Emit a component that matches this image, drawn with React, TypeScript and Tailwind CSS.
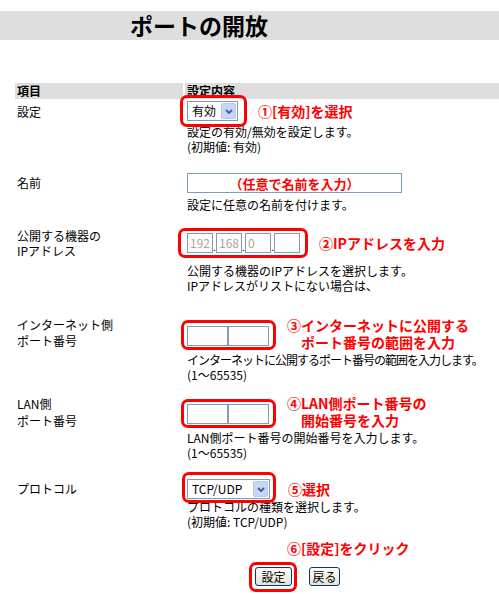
import type { ReactNode } from "react";

// red annotation frame drawn over a control
function Frame({ children, inset }: { children: ReactNode; inset: string }) {
  return (
    <div className="relative inline-flex">
      {children}
      <span
        className={`pointer-events-none absolute rounded-[7px] border-[3px] border-[#ff0000] ${inset}`}
      />
    </div>
  );
}

function Select({ value, width }: { value: string; width: string }) {
  return (
    <div
      className={`flex h-[20px] items-center justify-between border border-[#7f9db9] bg-white pl-[4px] pr-[1px] ${width}`}
    >
      <span className="text-[12px] leading-none">{value}</span>
      <span className="flex h-[16px] w-[15px] items-center justify-center rounded-[2px] border border-[#b4c8f6] bg-[#c6d6fb]">
        <svg width="8" height="5" viewBox="0 0 8 5">
          <path d="M1 1 L4 4 L7 1" fill="none" stroke="#4d6185" strokeWidth="2" />
        </svg>
      </span>
    </div>
  );
}

function XpButton({ label, width }: { label: string; width: string }) {
  return (
    <button
      className={`flex h-[19px] items-center justify-center rounded-[3px] border border-[#003c74] bg-gradient-to-b from-white to-[#e6e3d6] text-[12px] leading-none text-black ${width}`}
    >
      {label}
    </button>
  );
}

function PortPair() {
  return (
    <div className="flex">
      <div className="h-[20px] w-[41px] border border-[#7f9db9]" />
      <div className="h-[20px] w-[41px] border border-[#7f9db9]" />
    </div>
  );
}

const note = "font-bold text-[#ff0000] text-[14px] whitespace-nowrap";
const label = "ml-[15px] w-[170px] shrink-0 pl-[2px] whitespace-nowrap";

export default function App() {
  return (
    <div className="h-[594px] w-[499px] overflow-hidden bg-white font-['Noto_Sans_CJK_JP',sans-serif] text-[12px] leading-[15px] text-black">
      {/* Title band */}
      <div className="mt-[11px] flex h-[29px] items-center bg-[#dedede] pl-[130px] text-[23px] font-bold leading-none">
        ポートの開放
      </div>

      {/* Table header */}
      <div className="mt-[43px] flex h-[16px] font-bold leading-[16px]">
        <div className="ml-[15px] w-[168px] shrink-0 bg-[#dedede] pl-[2px]">項目</div>
        <div className="ml-[2px] flex-1 bg-[#dedede] pl-[2px]">設定内容</div>
      </div>

      {/* 設定 */}
      <div className="flex">
        <div className={`${label} pt-[5px]`}>設定</div>
        <div className="pl-[2px] pt-[2px]">
          <div className="flex items-center">
            <Frame inset="-left-[7px] -right-[9px] -top-[6px] -bottom-[6px]">
              <Select value="有効" width="w-[51px]" />
            </Frame>
            <span className={`ml-[20px] ${note}`}>①[有効]を選択</span>
          </div>
          <div className="mt-[3px] whitespace-nowrap">
            設定の有効/無効を設定します。
            <br />
            (初期値: 有効)
          </div>
        </div>
      </div>

      {/* 名前 */}
      <div className="mt-[19px] flex">
        <div className={`${label} pt-[2px]`}>名前</div>
        <div className="pl-[2px]">
          <div className="flex h-[20px] w-[215px] items-center justify-center border border-[#7f9db9] text-[13px] font-bold text-[#ff0000]">
            （任意で名前を入力）
          </div>
          <div className="mt-[4px] whitespace-nowrap">設定に任意の名前を付けます。</div>
        </div>
      </div>

      {/* IP address */}
      <div className="mt-[16px] flex">
        <div className={label}>
          公開する機器の
          <br />
          IPアドレス
        </div>
        <div className="pl-[2px] pt-[5px]">
          <div className="flex items-center">
            <Frame inset="-left-[9px] -right-[8px] -top-[5px] -bottom-[5px]">
              <div className="flex">
                {["192", "168", "0", ""].map((v, i) => (
                  <div key={i} className="flex">
                    {i > 0 && (
                      <span className="flex w-[3px] items-end justify-center pb-[1px] text-[10px] leading-none">
                        .
                      </span>
                    )}
                    <div className="flex h-[20px] w-[26px] items-center border border-[#7f9db9] pl-[2px] text-[12px] leading-none text-[#aca899]">
                      {v}
                    </div>
                  </div>
                ))}
              </div>
            </Frame>
            <span className={`ml-[19px] ${note}`}>②IPアドレスを入力</span>
          </div>
          <div className="mt-[10px] whitespace-nowrap">
            公開する機器のIPアドレスを選択します。
            <br />
            IPアドレスがリストにない場合は、
          </div>
        </div>
      </div>

      {/* Internet side port */}
      <div className="mt-[24px] flex">
        <div className={`${label} leading-[16px]`}>
          インターネット側
          <br />
          ポート番号
        </div>
        <div className="pl-[2px] pt-[9px]">
          <div className="flex h-[20px]">
            <Frame inset="-left-[6px] -right-[7px] -top-[6px] -bottom-[4px]">
              <PortPair />
            </Frame>
            <div className={`-mt-[9px] ml-[18px] self-start leading-[17px] ${note}`}>
              <div>③インターネットに公開する</div>
              <div className="pl-[14px]">ポート番号の範囲を入力</div>
            </div>
          </div>
          <div className="mt-[6px] whitespace-nowrap">
            <span className="tracking-[-1px]">インターネットに公開するポート番号の範囲を入力します。</span>
            <br />
            (1～65535)
          </div>
        </div>
      </div>

      {/* LAN side port */}
      <div className="mt-[13px] flex">
        <div className={`${label} leading-[17px]`}>
          LAN側
          <br />
          ポート番号
        </div>
        <div className="pl-[2px] pt-[9px]">
          <div className="flex h-[20px]">
            <Frame inset="-left-[6px] -right-[7px] -top-[5px] -bottom-[4px]">
              <PortPair />
            </Frame>
            <div className={`-mt-[9px] ml-[18px] self-start leading-[17px] ${note}`}>
              <div>④LAN側ポート番号の</div>
              <div className="pl-[14px]">開始番号を入力</div>
            </div>
          </div>
          <div className="mt-[6px] whitespace-nowrap">
            LAN側ポート番号の開始番号を入力します。
            <br />
            (1～65535)
          </div>
        </div>
      </div>

      {/* Protocol */}
      <div className="mt-[19px] flex">
        <div className={`${label} pt-[2px]`}>プロトコル</div>
        <div className="pl-[2px]">
          <div className="flex items-center">
            <Frame inset="-left-[5px] -right-[6px] -top-[7px] -bottom-[4px]">
              <Select value="TCP/UDP" width="w-[83px]" />
            </Frame>
            <span className={`ml-[18px] ${note}`}>⑤選択</span>
          </div>
          <div className="whitespace-nowrap">
            プロトコルの種類を選択します。
            <br />
            (初期値: TCP/UDP)
          </div>
        </div>
      </div>

      {/* Submit */}
      <div className={`mt-[10px] pl-[287px] leading-[18px] ${note}`}>⑥[設定]をクリック</div>
      <div className="mt-[10px] flex pl-[255px]">
        <Frame inset="-left-[6px] -right-[5px] -top-[5px] -bottom-[6px]">
          <XpButton label="設定" width="w-[37px]" />
        </Frame>
        <div className="ml-[17px]">
          <XpButton label="戻る" width="w-[31px]" />
        </div>
      </div>
    </div>
  );
}
